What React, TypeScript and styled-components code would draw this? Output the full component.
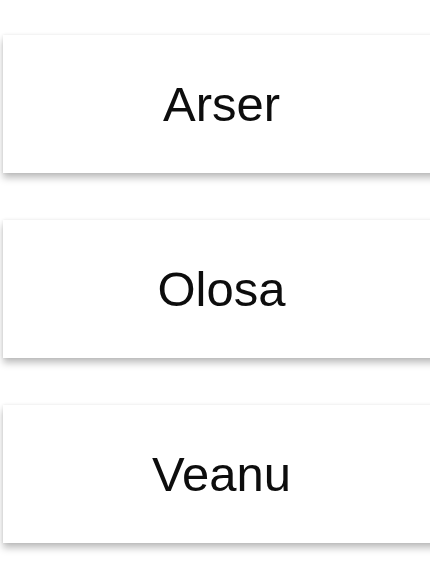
import React from "react"
import styled, { createGlobalStyle } from "styled-components"

const GlobalStyle = createGlobalStyle`
    html {
        overflow: hidden;
    }

    body {
        margin: 0;
        padding: 0;
        background: #ffffff;
    }
`

const List = styled.div`
    display: flex;
    flex-direction: column;
    gap: 47px;
    padding: 35px 0 20px 3px;
`

const Card = styled.div`
    display: flex;
    align-items: center;
    justify-content: center;
    width: 437px;
    height: 138px;
    background: #ffffff;
    box-shadow: 0 0 3px rgba(0, 0, 0, 0.08), 0 5px 7px rgba(0, 0, 0, 0.25);
    font-family: "Liberation Sans", Arial, sans-serif;
    font-size: 49px;
    color: #0d0d0d;
`

const names = ["Arser", "Olosa", "Veanu"]

export default function App() {
    return (
        <>
            <GlobalStyle />
            <List>
                {names.map(name => (
                    <Card key={name}>{name}</Card>
                ))}
            </List>
        </>
    )
}
